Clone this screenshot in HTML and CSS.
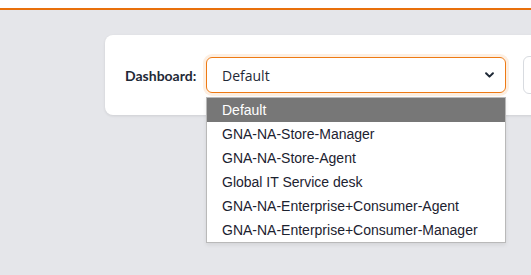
FILE: index.html
```html
<!DOCTYPE html>
<html lang="en">
<head>
    <meta charset="UTF-8">
    <meta name="viewport" content="width=device-width, initial-scale=1.0">
    <title>Dashboard</title>
    <link rel="stylesheet" href="styles.css">
</head>
<body>
    <header class="topbar"></header>

    <main class="content">
        <div class="card">
            <label class="field-label" for="dashboard">Dashboard:</label>
            <div class="select-wrap">
                <div class="select-box" id="dashboard">
                    <span class="select-value">Default</span>
                    <svg class="chevron" viewBox="0 0 10 6" fill="none" stroke="currentColor" stroke-width="2.2" stroke-linecap="round" stroke-linejoin="round">
                        <polyline points="1.2 1 5 4.8 8.8 1"></polyline>
                    </svg>
                </div>
                <ul class="options">
                    <li class="option active">Default</li>
                    <li class="option">GNA-NA-Store-Manager</li>
                    <li class="option">GNA-NA-Store-Agent</li>
                    <li class="option">Global IT Service desk</li>
                    <li class="option">GNA-NA-Enterprise+Consumer-Agent</li>
                    <li class="option">GNA-NA-Enterprise+Consumer-Manager</li>
                </ul>
            </div>
            <div class="next-field"></div>
        </div>
    </main>
</body>
</html>
```

FILE: styles.css
```css
* {
    margin: 0;
    padding: 0;
    box-sizing: border-box;
}

html {
    overflow: hidden;
}

body {
    background-color: #e5e6ea;
    font-family: Lato, "Open Sans", sans-serif;
    min-height: 100vh;
}

.topbar {
    height: 10px;
    background: #fff;
    border-bottom: 2px solid #e8700c;
}

.content {
    padding: 25px 0 0 105px;
}

.card {
    display: flex;
    align-items: center;
    gap: 8px;
    width: 520px;
    height: 80px;
    padding: 0 20px;
    background: #fff;
    border-radius: 8px;
    box-shadow: 0 1px 3px rgba(0, 0, 0, 0.1);
}

.field-label {
    flex-shrink: 0;
    width: 73px;
    font-size: 14px;
    font-weight: bold;
    color: #1f2937;
    white-space: nowrap;
}

.select-wrap {
    position: relative;
    flex-shrink: 0;
}

.select-box {
    display: flex;
    align-items: center;
    justify-content: space-between;
    width: 300px;
    height: 36px;
    padding: 0 11px 0 15px;
    border: 1px solid #ee7a14;
    border-radius: 6px;
    box-shadow: 0 0 0 3px rgba(238, 122, 20, 0.12);
    font-family: "Open Sans", Arial, sans-serif;
    font-size: 14px;
    color: #1f2937;
}

.chevron {
    width: 9px;
    height: 6px;
    color: #1f2937;
}

.options {
    position: absolute;
    top: 40px;
    left: 0;
    width: 300px;
    list-style: none;
    background: #fff;
    border: 1px solid #b9b9b9;
    box-shadow: 0 2px 4px rgba(0, 0, 0, 0.08);
    z-index: 10;
}

.option {
    height: 24px;
    line-height: 24px;
    padding-left: 15px;
    font-family: "Liberation Sans", Arial, sans-serif;
    font-size: 14px;
    color: #1c2230;
}

.option.active {
    background: #777;
    color: #fff;
}

.next-field {
    flex-shrink: 0;
    width: 60px;
    height: 38px;
    margin-left: 9px;
    border: 1px solid #d8dbe0;
    border-radius: 6px;
}
```
